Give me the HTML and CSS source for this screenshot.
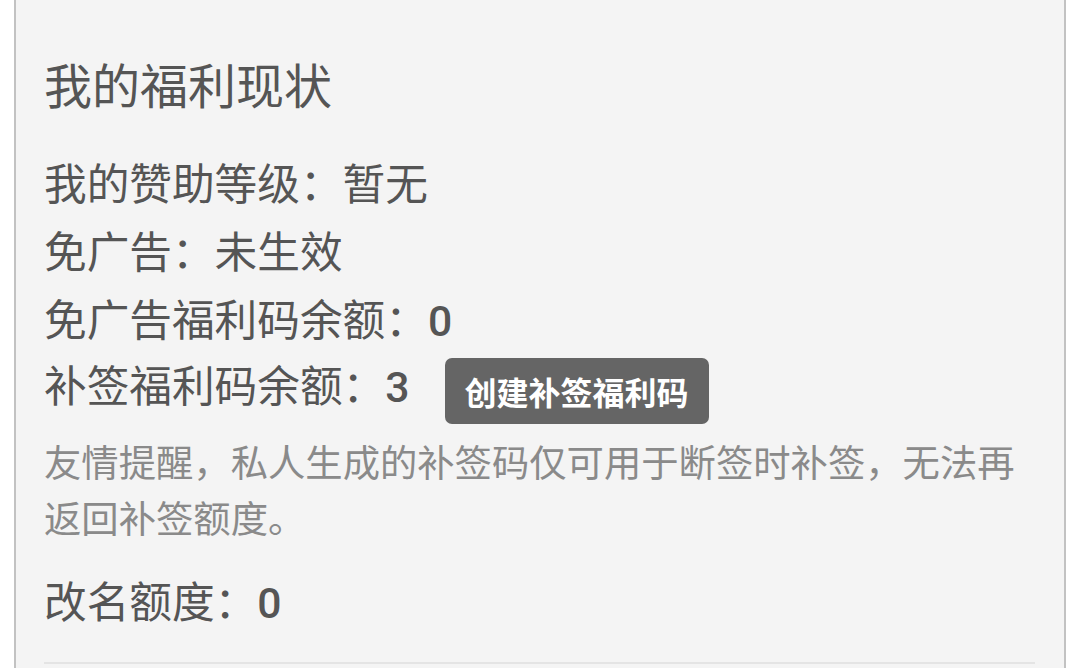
FILE: index.html
```html
<!DOCTYPE html>
<html lang="zh-CN">
<head>
<meta charset="utf-8">
<title>我的福利现状</title>
<link rel="stylesheet" href="styles.css">
</head>
<body>
<div class="panel">
  <h2 class="title">我的福利现状</h2>
  <p class="line">我的赞助等级：暂无</p>
  <p class="line">免广告：未生效</p>
  <p class="line">免广告福利码余额：<span class="num">0</span></p>
  <div class="row">
    <span class="row-text">补签福利码余额：<span class="num">3</span></span>
    <button class="btn">创建补签福利码</button>
  </div>
  <p class="hint">友情提醒，私人生成的补签码仅可用于断签时补签，无法再返回补签额度。</p>
  <p class="line rename">改名额度：<span class="num">0</span></p>
  <div class="divider"></div>
</div>
</body>
</html>
```

FILE: styles.css
```css
html, body {
  margin: 0;
  padding: 0;
  background: #ffffff;
  overflow: hidden;
}

body {
  font-family: Roboto, "Noto Sans CJK SC", sans-serif;
  color: #555555;
}

.panel {
  margin-left: 14px;
  width: 1052px;
  min-height: 700px;
  box-sizing: border-box;
  border-left: 2px solid #c2c2c2;
  border-right: 2px solid #c2c2c2;
  background: #f4f4f4;
  padding: 56px 29px 0 28px;
}

.title {
  margin: 0 0 31px 0;
  font-size: 48px;
  line-height: 64px;
  font-weight: 400;
  color: #555555;
}

.line {
  margin: 0;
  font-size: 42.67px;
  line-height: 68px;
}

.num {
  font-family: Roboto, sans-serif;
  font-weight: 500;
}

.row {
  display: flex;
  align-items: flex-start;
  margin-top: 2px;
}

.row-text {
  font-size: 42.67px;
  line-height: 61px;
}

.btn {
  margin: 1px 0 0 35px;
  height: 66px;
  padding: 0 20px;
  border: none;
  border-radius: 7px;
  background: #656565;
  color: #ffffff;
  font-family: "Noto Sans CJK SC", sans-serif;
  font-size: 32px;
  font-weight: 700;
  line-height: 66px;
}

.hint {
  margin: 12px 0 0 0;
  font-size: 37.33px;
  line-height: 56px;
  color: #8a8a8a;
}

.rename {
  margin-top: 21px;
}

.divider {
  margin-top: 25px;
  border-top: 2px solid #e4e4e4;
}
```
